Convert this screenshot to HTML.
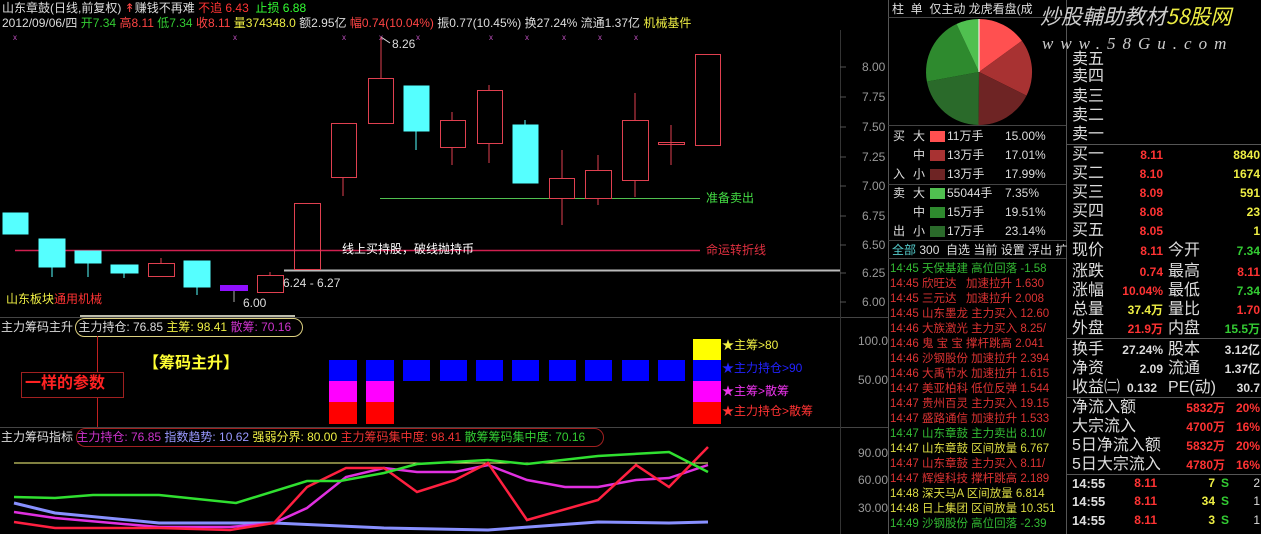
<!DOCTYPE html>
<html><head><meta charset="utf-8"><style>
*{margin:0;padding:0;box-sizing:border-box}
body{width:1261px;height:534px;background:#000;overflow:hidden;position:relative;font-family:"Liberation Sans","Noto Sans CJK SC",sans-serif;font-size:12px;color:#ddd}
.t{position:absolute;white-space:nowrap;line-height:1}
.r{text-align:right}
.big{font-size:16px}
</style></head><body>
<svg width="1261" height="534" style="position:absolute;left:0;top:0">
<line x1="0" y1="317.5" x2="888" y2="317.5" stroke="#444"/>
<line x1="0" y1="427.5" x2="888" y2="427.5" stroke="#444"/>
<line x1="840.5" y1="30" x2="840.5" y2="534" stroke="#333"/>
<line x1="888.5" y1="0" x2="888.5" y2="534" stroke="#555"/>
<line x1="1066.5" y1="0" x2="1066.5" y2="534" stroke="#555"/>
<line x1="888" y1="17.5" x2="1066" y2="17.5" stroke="#444"/>
<line x1="888" y1="125.5" x2="1066" y2="125.5" stroke="#444"/>
<line x1="888" y1="184.5" x2="1066" y2="184.5" stroke="#444"/>
<line x1="888" y1="240.5" x2="1066" y2="240.5" stroke="#444"/>
<line x1="888" y1="258.5" x2="1066" y2="258.5" stroke="#444"/>
<line x1="1066" y1="144.5" x2="1261" y2="144.5" stroke="#555"/>
<line x1="1066" y1="338.5" x2="1261" y2="338.5" stroke="#555"/>
<line x1="1066" y1="397.5" x2="1261" y2="397.5" stroke="#555"/>
<line x1="1066" y1="474.5" x2="1261" y2="474.5" stroke="#555"/>
<g stroke="#555"><line x1="840" y1="67" x2="846" y2="67"/><line x1="840" y1="97" x2="846" y2="97"/><line x1="840" y1="127" x2="846" y2="127"/><line x1="840" y1="157" x2="846" y2="157"/><line x1="840" y1="186" x2="846" y2="186"/><line x1="840" y1="216" x2="846" y2="216"/><line x1="840" y1="245" x2="846" y2="245"/><line x1="840" y1="273" x2="846" y2="273"/><line x1="840" y1="302" x2="846" y2="302"/></g>
<!-- top markers -->
<g fill="#c050c0" font-size="8" font-family="Liberation Sans">
<text x="13" y="40">x</text><text x="233" y="40">x</text><text x="342" y="40">x</text><text x="379" y="40">x</text><text x="416" y="40">x</text><text x="489" y="40">x</text><text x="525" y="40">x</text><text x="562" y="40">x</text><text x="598" y="40">x</text><text x="634" y="40">x</text>
</g>
<line x1="381" y1="37" x2="390" y2="43" stroke="#ddd"/>
<line x1="15" y1="250.5" x2="700" y2="250.5" stroke="#d02050" stroke-width="1.5"/>
<line x1="380" y1="198.5" x2="700" y2="198.5" stroke="#50c050"/>
<line x1="284" y1="270.5" x2="840" y2="270.5" stroke="#bbb" stroke-width="2"/>
<line x1="80" y1="316" x2="295" y2="316" stroke="#bba" stroke-width="2"/>
<g stroke="#55ffff" fill="#55ffff">
<rect x="3" y="213" width="25" height="21"/>
<line x1="52" y1="267" x2="52" y2="277"/><rect x="39" y="239" width="26" height="28"/>
<line x1="88" y1="263" x2="88" y2="277"/><rect x="75" y="251" width="26" height="12"/>
<line x1="124" y1="273" x2="124" y2="278"/><rect x="111" y="265" width="27" height="8"/>
<line x1="197" y1="287" x2="197" y2="295"/><rect x="184" y="261" width="26" height="26"/>
<line x1="416" y1="131" x2="416" y2="150"/><rect x="404" y="86" width="25" height="45"/>
<line x1="525" y1="120" x2="525" y2="125"/><rect x="513" y="125" width="25" height="58"/>
</g>
<line x1="234" y1="291" x2="234" y2="302" stroke="#aaa"/>
<rect x="220" y="285" width="28" height="6" fill="#9010ff"/>
<g stroke="#e04050" fill="none">
<line x1="161" y1="258" x2="161" y2="263"/><rect x="148.5" y="263.5" width="26" height="13"/>
<line x1="270" y1="272" x2="270" y2="275"/><rect x="257.5" y="275.5" width="26" height="17"/>
<rect x="294.5" y="203.5" width="26" height="66"/>
<line x1="343" y1="177" x2="343" y2="196"/><rect x="331.5" y="123.5" width="25" height="54"/>
<line x1="381" y1="37" x2="381" y2="78"/><rect x="368.5" y="78.5" width="25" height="45"/>
<line x1="452" y1="112" x2="452" y2="120"/><line x1="452" y1="147" x2="452" y2="165"/><rect x="440.5" y="120.5" width="25" height="27"/>
<line x1="489" y1="85" x2="489" y2="90"/><line x1="489" y1="143" x2="489" y2="163"/><rect x="477.5" y="90.5" width="25" height="53"/>
<line x1="562" y1="150" x2="562" y2="178"/><line x1="562" y1="198" x2="562" y2="225"/><rect x="549.5" y="178.5" width="25" height="20"/>
<line x1="598" y1="155" x2="598" y2="170"/><line x1="598" y1="198" x2="598" y2="205"/><rect x="585.5" y="170.5" width="26" height="28"/>
<line x1="635" y1="93" x2="635" y2="120"/><line x1="635" y1="180" x2="635" y2="197"/><rect x="622.5" y="120.5" width="26" height="60"/>
<line x1="671" y1="125" x2="671" y2="165"/><rect x="658.5" y="142.5" width="26" height="2"/>
<rect x="695.5" y="54.5" width="25" height="91"/>
</g>
<rect x="329" y="360" width="28" height="21" fill="#0000ff"/><rect x="329" y="381" width="28" height="21" fill="#ff00ff"/><rect x="329" y="402" width="28" height="22" fill="#ff0000"/>
<rect x="366" y="360" width="28" height="21" fill="#0000ff"/><rect x="366" y="381" width="28" height="21" fill="#ff00ff"/><rect x="366" y="402" width="28" height="22" fill="#ff0000"/>
<g fill="#0000ff"><rect x="403" y="360" width="27" height="21"/><rect x="440" y="360" width="27" height="21"/><rect x="476" y="360" width="27" height="21"/><rect x="512" y="360" width="27" height="21"/><rect x="549" y="360" width="27" height="21"/><rect x="585" y="360" width="27" height="21"/><rect x="622" y="360" width="27" height="21"/><rect x="658" y="360" width="27" height="21"/></g>
<rect x="693" y="339" width="28" height="21" fill="#ffff00"/><rect x="693" y="360" width="28" height="21" fill="#0000ff"/><rect x="693" y="381" width="28" height="21" fill="#ff00ff"/><rect x="693" y="402" width="28" height="22" fill="#ff0000"/>
<rect x="75.5" y="318.5" width="227" height="18" rx="9" fill="none" stroke="#ddd080"/>
<line x1="97.5" y1="336" x2="97.5" y2="427" stroke="#c02020"/>
<rect x="21.5" y="372.5" width="102" height="25" fill="#000" stroke="#a02020"/>
<rect x="76.5" y="428.5" width="527" height="18" rx="9" fill="none" stroke="#a02020"/>
<line x1="14" y1="463" x2="708" y2="463" stroke="#ffff80"/>
<polyline fill="none" stroke="#8890ff" stroke-width="3" points="14,503 55,513 159,523 274,523 384,528 488,530 598,522 669,523 708,522"/>
<polyline fill="none" stroke="#e030e0" stroke-width="2.5" points="14,512 55,518 159,527 230,527 274,523 307,508 346,477 384,468 417,472 455,472 488,465 527,480 565,487 598,487 636,480 669,478 708,465"/>
<polyline fill="none" stroke="#ff2040" stroke-width="2.5" points="14,522 55,528 159,528 230,530 274,523 307,487 346,468 384,468 417,492 455,480 488,463 527,520 598,500 636,465 669,487 708,447"/>
<polyline fill="none" stroke="#30e030" stroke-width="2.5" points="14,497 55,498 93,495 159,495 236,503 307,481 340,481 384,473 417,464 488,460 527,464 598,456 669,452 708,472"/>
<g transform="translate(979,72)">
<path d="M0,0 L0,-53 A53,53 0 0 1 42.9,-31.2 Z" fill="#ff5050"/>
<path d="M0,0 L42.9,-31.2 A53,53 0 0 1 47.5,23.6 Z" fill="#a83232"/>
<path d="M0,0 L47.5,23.6 A53,53 0 0 1 -0.5,53 Z" fill="#6e2424"/>
<path d="M0,0 L-0.5,53 A53,53 0 0 1 -52.1,9.6 Z" fill="#2a6a2a"/>
<path d="M0,0 L-52.1,9.6 A53,53 0 0 1 -22.5,-48 Z" fill="#2e8a2e"/>
<path d="M0,0 L-22.5,-48 A53,53 0 0 1 0,-53 Z" fill="#50c050"/>
<line x1="0" y1="0" x2="0" y2="-53" stroke="#fff"/>
</g>
<g><rect x="930" y="131" width="15" height="11" fill="#ff5050"/><rect x="930" y="150" width="15" height="11" fill="#a83232"/><rect x="930" y="169" width="15" height="11" fill="#6e2424"/><rect x="930" y="188" width="15" height="11" fill="#50c050"/><rect x="930" y="207" width="15" height="11" fill="#2e8a2e"/><rect x="930" y="226" width="15" height="11" fill="#2a6a2a"/></g>
</svg>

<div class="t" style="left:2px;top:2px;color:#ddd">山东章鼓(日线,前复权) <span style="color:#f44">↟</span>赚钱不再难 <span style="color:#f33">不追 6.43</span> &nbsp;<span style="color:#3f3">止损 6.88</span></div>
<div class="t" style="left:2px;top:17px;color:#ddd">2012/09/06/四 <span style="color:#3c3">开7.34</span> <span style="color:#f44">高8.11</span> <span style="color:#3c3">低7.34</span> <span style="color:#f44">收8.11</span> <span style="color:#ee4">量374348.0</span> 额2.95亿 <span style="color:#f44">幅0.74(10.04%)</span> 振0.77(10.45%) 换27.24% 流通1.37亿 <span style="color:#ee4">机械基件</span></div>
<div class="t" style="left:392px;top:38px;color:#ddd">8.26</div>
<div class="t" style="left:283px;top:277px;color:#ddd">6.24 - 6.27</div>
<div class="t" style="left:243px;top:297px;color:#ddd">6.00</div>
<div class="t" style="left:342px;top:243px;color:#fff">线上买持股，破线抛持币</div>
<div class="t" style="left:706px;top:192px;color:#4d4">准备卖出</div>
<div class="t" style="left:706px;top:244px;color:#e03040">命运转折线</div>
<div class="t" style="left:6px;top:293px;color:#ee4">山东板块<span style="color:#f33">通用机械</span></div>
<div class="t" style="left:862px;top:61px;color:#999">8.00</div>
<div class="t" style="left:862px;top:91px;color:#999">7.75</div>
<div class="t" style="left:862px;top:121px;color:#999">7.50</div>
<div class="t" style="left:862px;top:151px;color:#999">7.25</div>
<div class="t" style="left:862px;top:180px;color:#999">7.00</div>
<div class="t" style="left:862px;top:210px;color:#999">6.75</div>
<div class="t" style="left:862px;top:239px;color:#999">6.50</div>
<div class="t" style="left:862px;top:267px;color:#999">6.25</div>
<div class="t" style="left:862px;top:296px;color:#999">6.00</div>
<div class="t" style="left:858px;top:335px;color:#999">100.0</div>
<div class="t" style="left:858px;top:374px;color:#999">50.00</div>
<div class="t" style="left:858px;top:447px;color:#999">90.00</div>
<div class="t" style="left:858px;top:474px;color:#999">60.00</div>
<div class="t" style="left:858px;top:502px;color:#999">30.00</div>
<div class="t" style="left:1px;top:321px;color:#ddd">主力筹码主升 <span style="margin-left:2px">主力持仓: 76.85</span> <span style="color:#ee4">主筹: 98.41</span> <span style="color:#c3c">散筹: 70.16</span></div>
<div class="t" style="left:143px;top:356px;color:#ff3;font-size:16px;font-weight:bold">【筹码主升】</div>
<div class="t" style="left:25px;top:376px;color:#f22;font-size:16px;font-weight:bold">一样的参数</div>
<div class="t" style="left:722px;top:339px;color:#ee4">★主筹&gt;80</div>
<div class="t" style="left:722px;top:362px;color:#22f">★主力持仓&gt;90</div>
<div class="t" style="left:722px;top:385px;color:#e3e">★主筹&gt;散筹</div>
<div class="t" style="left:722px;top:405px;color:#f33">★主力持仓&gt;散筹</div>
<div class="t" style="left:1px;top:431px;color:#ddd">主力筹码指标 <span style="color:#c3c">主力持仓: 76.85</span> <span style="color:#99f">指数趋势: 10.62</span> <span style="color:#ee4">强弱分界: 80.00</span> <span style="color:#e33">主力筹码集中度: 98.41</span> <span style="color:#3c3">散筹筹码集中度: 70.16</span></div>
<div class="t" style="left:892px;top:3px;color:#ddd">柱 &nbsp;单 &nbsp;仅主动 龙虎看盘(成</div>
<div class="t" style="left:1040px;top:6px;color:#ccc;font-size:21px;font-style:italic;font-family:'Noto Sans CJK SC',sans-serif">炒股輔助教材<span style="color:#ee4">58股网</span></div>
<div class="t" style="left:1042px;top:35px;color:#ccc;font-size:17px;font-style:italic;letter-spacing:7px;font-family:'Liberation Serif',serif">www.58Gu.com</div>
<div class="t" style="left:893px;top:130px">买</div><div class="t" style="left:893px;top:168px">入</div>
<div class="t" style="left:893px;top:187px">卖</div><div class="t" style="left:893px;top:225px">出</div>
<div class="t" style="left:913px;top:130px">大</div><div class="t" style="left:913px;top:149px">中</div><div class="t" style="left:913px;top:168px">小</div>
<div class="t" style="left:913px;top:187px">大</div><div class="t" style="left:913px;top:206px">中</div><div class="t" style="left:913px;top:225px">小</div>
<div class="t" style="left:947px;top:130px">11万手</div><div class="t" style="left:1005px;top:130px">15.00%</div>
<div class="t" style="left:947px;top:149px">13万手</div><div class="t" style="left:1005px;top:149px">17.01%</div>
<div class="t" style="left:947px;top:168px">13万手</div><div class="t" style="left:1005px;top:168px">17.99%</div>
<div class="t" style="left:947px;top:187px">55044手</div><div class="t" style="left:1005px;top:187px">7.35%</div>
<div class="t" style="left:947px;top:206px">15万手</div><div class="t" style="left:1005px;top:206px">19.51%</div>
<div class="t" style="left:947px;top:225px">17万手</div><div class="t" style="left:1005px;top:225px">23.14%</div>
<div class="t" style="left:892px;top:244px;color:#ddd"><span style="color:#5cc">全部</span> 300 &nbsp;自选 当前 设置 浮出 扩</div>
<div style="position:absolute;left:890px;top:262px;width:174px;height:272px;overflow:hidden;font-size:11.5px;line-height:15px">
<div style="color:#3b3">14:45 天保基建 高位回落 -1.58</div>
<div style="color:#d33">14:45 欣旺达 &nbsp;&nbsp;加速拉升 1.630</div>
<div style="color:#d33">14:45 三元达 &nbsp;&nbsp;加速拉升 2.008</div>
<div style="color:#d33">14:45 山东墨龙 主力买入 12.60</div>
<div style="color:#d33">14:46 大族激光 主力买入 8.25/</div>
<div style="color:#d33">14:46 鬼 宝 宝 撑杆跳高 2.041</div>
<div style="color:#d33">14:46 沙钢股份 加速拉升 2.394</div>
<div style="color:#d33">14:46 大禹节水 加速拉升 1.615</div>
<div style="color:#d33">14:47 美亚柏科 低位反弹 1.544</div>
<div style="color:#d33">14:47 贵州百灵 主力买入 19.15</div>
<div style="color:#d33">14:47 盛路通信 加速拉升 1.533</div>
<div style="color:#3b3">14:47 山东章鼓 主力卖出 8.10/</div>
<div style="color:#dd4">14:47 山东章鼓 区间放量 6.767</div>
<div style="color:#d33">14:47 山东章鼓 主力买入 8.11/</div>
<div style="color:#d33">14:47 辉煌科技 撑杆跳高 2.189</div>
<div style="color:#dd4">14:48 深天马A 区间放量 6.814</div>
<div style="color:#dd4">14:48 日上集团 区间放量 10.351</div>
<div style="color:#3b3">14:49 沙钢股份 高位回落 -2.39</div>
</div>
<div class="t big" style="left:1072px;top:52px;color:#ddd">卖五</div>
<div class="t big" style="left:1072px;top:69px;color:#ddd">卖四</div>
<div class="t big" style="left:1072px;top:89px;color:#ddd">卖三</div>
<div class="t big" style="left:1072px;top:108px;color:#ddd">卖二</div>
<div class="t big" style="left:1072px;top:127px;color:#ddd">卖一</div>
<div class="t big" style="left:1072px;top:147px">买一</div><div class="t r" style="left:1100px;width:63px;top:149px;color:#f33;font-weight:bold">8.11</div><div class="t r" style="left:1200px;width:60px;top:149px;color:#ee4;font-weight:bold">8840</div>
<div class="t big" style="left:1072px;top:166px">买二</div><div class="t r" style="left:1100px;width:63px;top:168px;color:#f33;font-weight:bold">8.10</div><div class="t r" style="left:1200px;width:60px;top:168px;color:#ee4;font-weight:bold">1674</div>
<div class="t big" style="left:1072px;top:185px">买三</div><div class="t r" style="left:1100px;width:63px;top:187px;color:#f33;font-weight:bold">8.09</div><div class="t r" style="left:1200px;width:60px;top:187px;color:#ee4;font-weight:bold">591</div>
<div class="t big" style="left:1072px;top:204px">买四</div><div class="t r" style="left:1100px;width:63px;top:206px;color:#f33;font-weight:bold">8.08</div><div class="t r" style="left:1200px;width:60px;top:206px;color:#ee4;font-weight:bold">23</div>
<div class="t big" style="left:1072px;top:223px">买五</div><div class="t r" style="left:1100px;width:63px;top:225px;color:#f33;font-weight:bold">8.05</div><div class="t r" style="left:1200px;width:60px;top:225px;color:#ee4;font-weight:bold">1</div>
<div class="t big" style="left:1072px;top:243px">现价</div><div class="t r" style="left:1100px;width:63px;top:245px;color:#f33;font-weight:bold">8.11</div><div class="t big" style="left:1168px;top:243px">今开</div><div class="t r" style="left:1200px;width:60px;top:245px;color:#3c3;font-weight:bold">7.34</div>
<div class="t big" style="left:1072px;top:264px">涨跌</div><div class="t r" style="left:1100px;width:63px;top:266px;color:#f33;font-weight:bold">0.74</div><div class="t big" style="left:1168px;top:264px">最高</div><div class="t r" style="left:1200px;width:60px;top:266px;color:#f33;font-weight:bold">8.11</div>
<div class="t big" style="left:1072px;top:283px">涨幅</div><div class="t r" style="left:1100px;width:63px;top:285px;color:#f33;font-weight:bold">10.04%</div><div class="t big" style="left:1168px;top:283px">最低</div><div class="t r" style="left:1200px;width:60px;top:285px;color:#3c3;font-weight:bold">7.34</div>
<div class="t big" style="left:1072px;top:302px">总量</div><div class="t r" style="left:1100px;width:63px;top:304px;color:#ee4;font-weight:bold">37.4万</div><div class="t big" style="left:1168px;top:302px">量比</div><div class="t r" style="left:1200px;width:60px;top:304px;color:#f33;font-weight:bold">1.70</div>
<div class="t big" style="left:1072px;top:321px">外盘</div><div class="t r" style="left:1100px;width:63px;top:323px;color:#f33;font-weight:bold">21.9万</div><div class="t big" style="left:1168px;top:321px">内盘</div><div class="t r" style="left:1200px;width:60px;top:323px;color:#3c3;font-weight:bold">15.5万</div>
<div class="t big" style="left:1072px;top:342px">换手</div><div class="t r" style="left:1100px;width:63px;top:344px;font-weight:bold">27.24%</div><div class="t big" style="left:1168px;top:342px">股本</div><div class="t r" style="left:1200px;width:60px;top:344px;font-weight:bold">3.12亿</div>
<div class="t big" style="left:1072px;top:361px">净资</div><div class="t r" style="left:1100px;width:63px;top:363px;font-weight:bold">2.09</div><div class="t big" style="left:1168px;top:361px">流通</div><div class="t r" style="left:1200px;width:60px;top:363px;font-weight:bold">1.37亿</div>
<div class="t big" style="left:1072px;top:380px">收益㈡</div><div class="t" style="left:1127px;top:382px;font-weight:bold">0.132</div><div class="t big" style="left:1168px;top:380px">PE(动)</div><div class="t r" style="left:1200px;width:60px;top:382px;font-weight:bold">30.7</div>
<div class="t big" style="left:1072px;top:400px">净流入额</div><div class="t r" style="left:1160px;width:65px;top:402px;color:#f33;font-weight:bold">5832万</div><div class="t r" style="left:1225px;width:35px;top:402px;color:#f33;font-weight:bold">20%</div>
<div class="t big" style="left:1072px;top:419px">大宗流入</div><div class="t r" style="left:1160px;width:65px;top:421px;color:#f33;font-weight:bold">4700万</div><div class="t r" style="left:1225px;width:35px;top:421px;color:#f33;font-weight:bold">16%</div>
<div class="t big" style="left:1072px;top:438px">5日净流入额</div><div class="t r" style="left:1160px;width:65px;top:440px;color:#f33;font-weight:bold">5832万</div><div class="t r" style="left:1225px;width:35px;top:440px;color:#f33;font-weight:bold">20%</div>
<div class="t big" style="left:1072px;top:457px">5日大宗流入</div><div class="t r" style="left:1160px;width:65px;top:459px;color:#f33;font-weight:bold">4780万</div><div class="t r" style="left:1225px;width:35px;top:459px;color:#f33;font-weight:bold">16%</div>
<div class="t" style="left:1072px;top:477px;font-weight:bold;font-size:13px">14:55</div><div class="t r" style="left:1100px;width:57px;top:477px;color:#f33;font-weight:bold">8.11</div><div class="t r" style="left:1180px;width:35px;top:477px;color:#ee4;font-weight:bold">7</div><div class="t" style="left:1221px;top:477px;color:#3c3;font-weight:bold">S</div><div class="t r" style="left:1230px;width:30px;top:477px">2</div>
<div class="t" style="left:1072px;top:495px;font-weight:bold;font-size:13px">14:55</div><div class="t r" style="left:1100px;width:57px;top:495px;color:#f33;font-weight:bold">8.11</div><div class="t r" style="left:1180px;width:35px;top:495px;color:#ee4;font-weight:bold">34</div><div class="t" style="left:1221px;top:495px;color:#3c3;font-weight:bold">S</div><div class="t r" style="left:1230px;width:30px;top:495px">1</div>
<div class="t" style="left:1072px;top:514px;font-weight:bold;font-size:13px">14:55</div><div class="t r" style="left:1100px;width:57px;top:514px;color:#f33;font-weight:bold">8.11</div><div class="t r" style="left:1180px;width:35px;top:514px;color:#ee4;font-weight:bold">3</div><div class="t" style="left:1221px;top:514px;color:#3c3;font-weight:bold">S</div><div class="t r" style="left:1230px;width:30px;top:514px">1</div>
</body></html>
